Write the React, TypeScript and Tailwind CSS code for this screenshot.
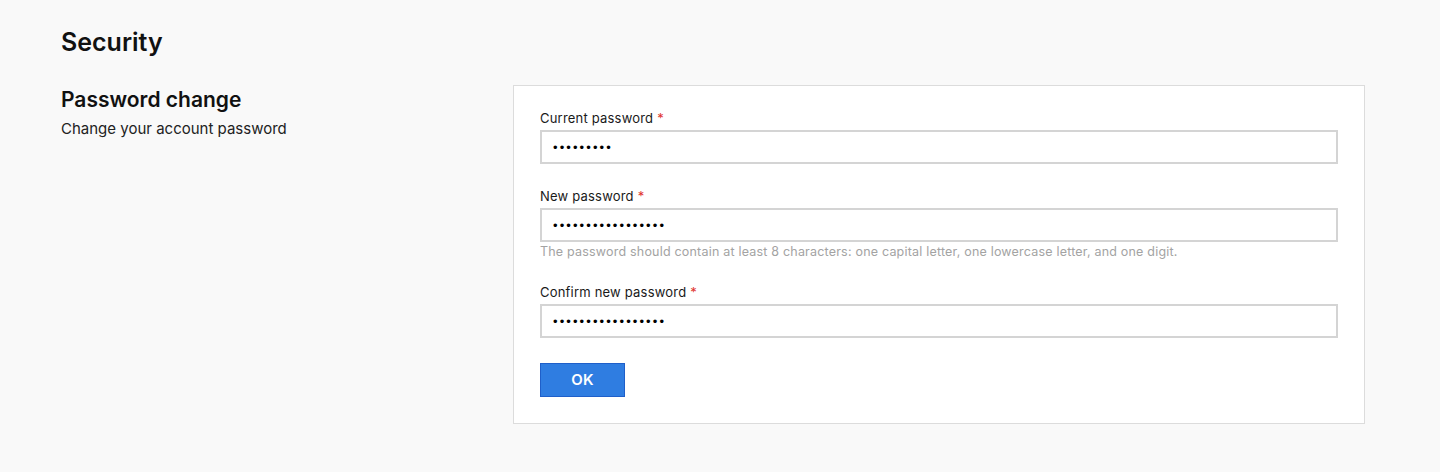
import { useState } from 'react'

function Field({
  label,
  value,
  hint,
}: {
  label: string
  value: string
  hint?: string
}) {
  const [val, setVal] = useState(value)
  return (
    <div className="flex flex-col">
      <label className="text-[13px] leading-4 tracking-[0.2px] text-[#1a1a1a] mb-[4px]">
        {label} <span className="text-[#e0322d]">*</span>
      </label>
      <input
        type="password"
        value={val}
        onChange={(e) => setVal(e.target.value)}
        className="h-[34px] w-full border-2 border-[#d4d4d4] bg-white px-[11px] font-['Liberation_Sans',Arial,sans-serif] text-[13px] tracking-[2.1px] text-black outline-none"
      />
      {hint && (
        <p className="mt-[2px] text-[12.5px] leading-4 tracking-[0.2px] text-[#a3a3a3]">{hint}</p>
      )}
    </div>
  )
}

export default function App() {
  return (
    <div className="min-h-[472px] w-full bg-[#f9f9f9] font-['Inter',sans-serif] text-[#111]">
      <div className="px-[61px] pt-[27px]">
        <h1 className="text-[25px] leading-[30px] font-semibold">Security</h1>
        <div className="mt-[28px] flex">
          <div className="w-[452px] shrink-0">
            <h2 className="mt-[3px] text-[21px] leading-6 font-semibold">Password change</h2>
            <p className="mt-[7px] text-[15px] leading-5 text-[#222]">
              Change your account password
            </p>
          </div>
          <div className="w-[852px] border border-[#dcdcdc] bg-white px-[26px] pt-[24px] pb-[26px]">
            <div className="flex flex-col gap-[24px]">
              <Field label="Current password" value="password1" />
              <Field
                label="New password"
                value="newpassword123456"
                hint="The password should contain at least 8 characters: one capital letter, one lowercase letter, and one digit."
              />
              <Field label="Confirm new password" value="newpassword123456" />
            </div>
            <button className="mt-[25px] h-[34px] w-[85px] border border-[#1f5fc9] bg-[#2f7de1] text-[15px] font-semibold tracking-[0.3px] text-white">
              OK
            </button>
          </div>
        </div>
      </div>
    </div>
  )
}
